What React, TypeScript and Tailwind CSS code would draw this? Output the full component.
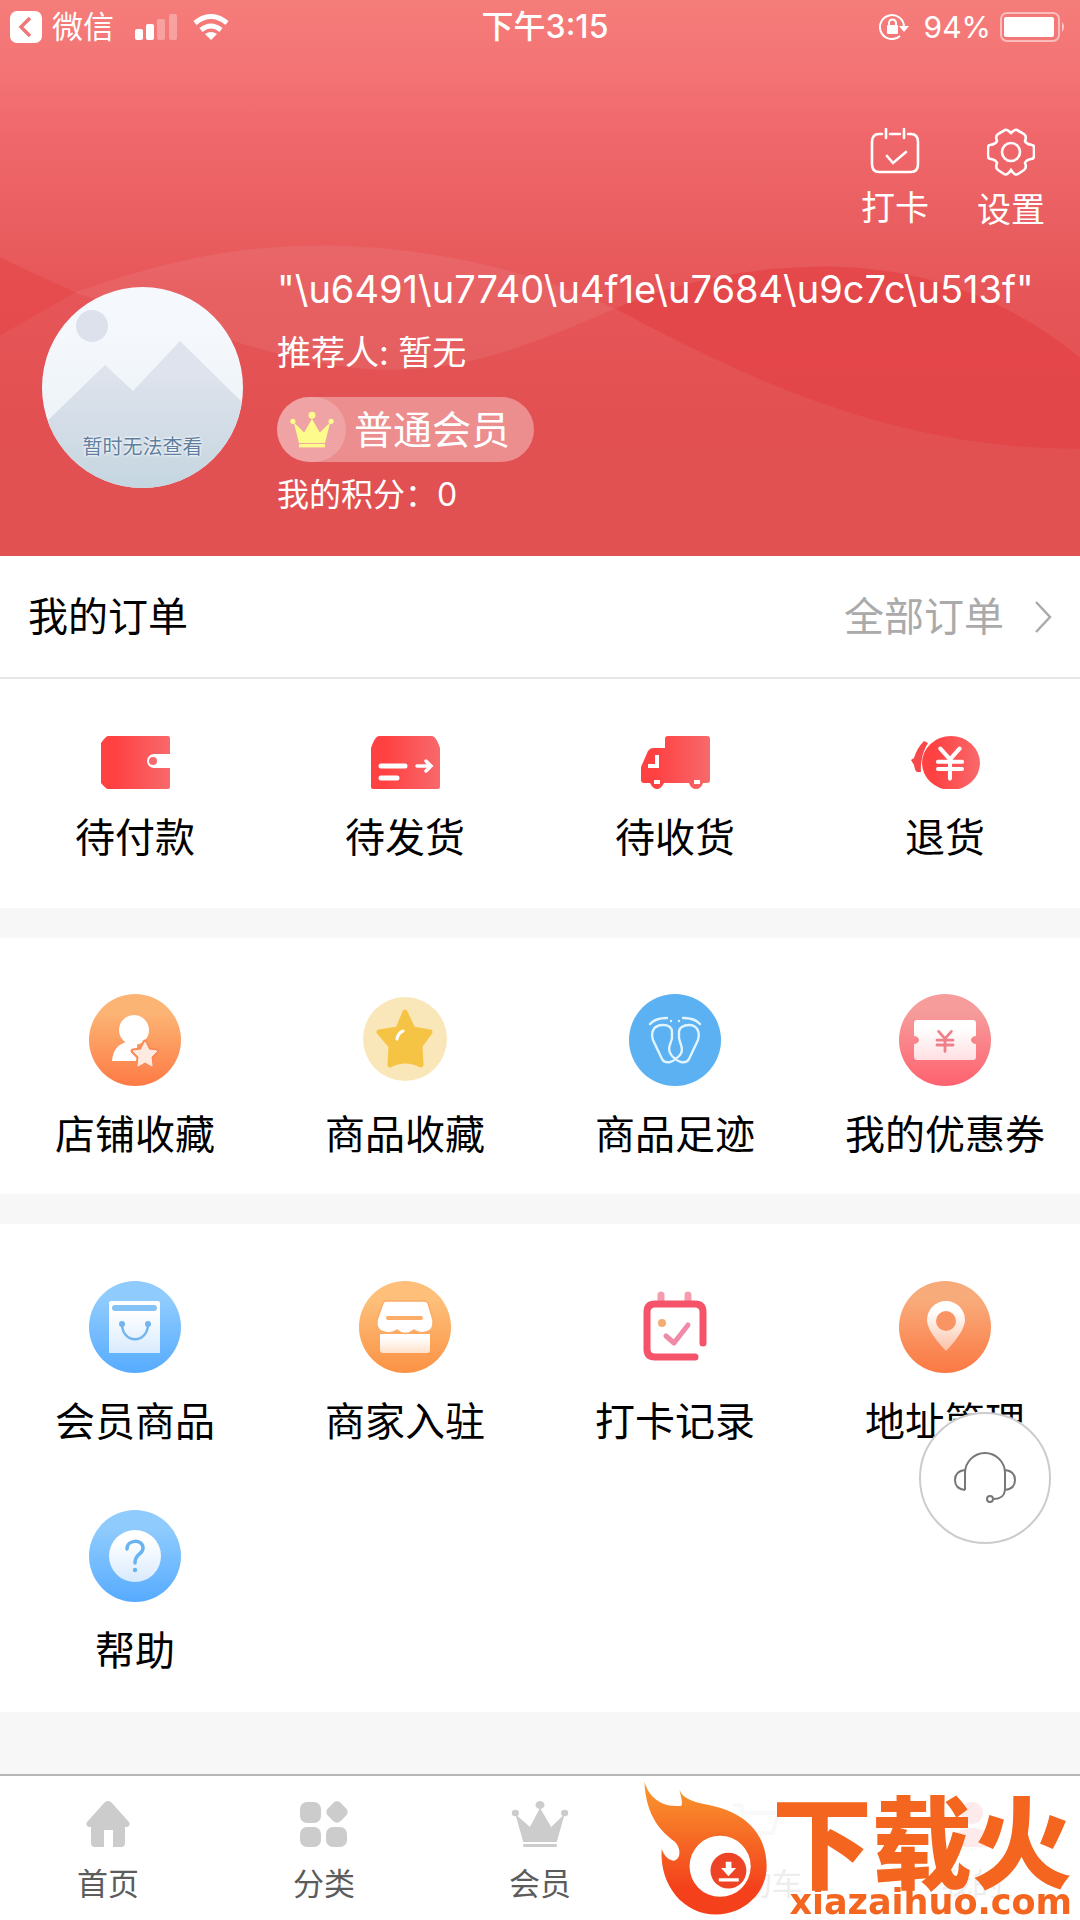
import type { ReactNode } from "react";

function Sym({ box, className, children }: { box: string; className: string; children: ReactNode }) {
  return (
    <svg viewBox={box} className={className} fill="none" aria-hidden="true">
      {children}
    </svg>
  );
}

function Gradients() {
  const stops: [string, string, string, boolean][] = [
    ["gOrange", "#fcb474", "#fd7a45", true],
    ["gAmber", "#fdbf7a", "#fb9244", true],
    ["gCoral", "#f8ab7a", "#fb7843", true],
    ["gPink", "#f69c9b", "#fe616f", true],
    ["gBlue", "#8fcbfd", "#56abff", true],
    ["gRed", "#ff4142", "#f8696c", false],
    ["gWhiteBlue", "#ffffff", "#d8eafd", true],
    ["gWhitePink", "#ffffff", "#ffdfe2", true],
    ["gWhiteAmber", "#ffffff", "#fee2cb", true],
    ["gPin", "#ffffff", "#fcc0a3", true],
    ["gAvatar", "#f5f8fc", "#e8f0f4", true],
    ["gHill", "#dfe3ed", "#c5d6e0", true],
    ["gFlame", "#f99a2e", "#f4411c", true],
  ];
  return (
    <svg className="absolute h-0 w-0" aria-hidden="true">
      <defs>
        {stops.map(([id, a, b, vertical]) => (
          <linearGradient key={id} id={id} x1="0" y1="0" x2={vertical ? "0" : "1"} y2={vertical ? "1" : "0"}>
            <stop offset={id === "gFlame" ? "0" : "0.2"} stopColor={a} />
            <stop offset={id === "gFlame" ? "0.8" : "1"} stopColor={b} />
          </linearGradient>
        ))}
      </defs>
    </svg>
  );
}

function Yen({ x, y, s, color, w }: { x: number; y: number; s: number; color: string; w: number }) {
  return (
    <path
      transform={`translate(${x} ${y}) scale(${s})`}
      d="M-8-12 0-3 8-12M0-3V13M-10-1H10M-10 5H10"
      stroke={color}
      strokeWidth={w}
      strokeLinecap="round"
    />
  );
}

const orders = [
  {
    label: "待付款",
    icon: (
      <>
        <path d="M7 0H67Q69 0 69 2V18H53A7 7 0 0 0 53 32H69V51Q69 53 67 53H7Q5 53 0 47V7Q5 0 7 0Z" fill="url(#gRed)" />
        <circle cx="52" cy="25" r="4" fill="#f8696c" />
      </>
    ),
  },
  {
    label: "待发货",
    icon: (
      <>
        <path d="M8 0H61Q65 0 69 12V51Q69 53 67 53H2Q0 53 0 51V12Q4 0 8 0Z" fill="url(#gRed)" />
        <path d="M10 30H34M10 42H26" stroke="#fff" strokeWidth="5" strokeLinecap="round" />
        <path d="M46 30H60M55 25 60 30 55 35" stroke="#fff" strokeWidth="3.5" strokeLinecap="round" />
      </>
    ),
  },
  {
    label: "待收货",
    icon: (
      <>
        <path
          d="M27 0H66Q69 0 69 3V44Q69 47 66 47H62Q60 53 55 53T48 47H23Q20 53 16 53T9 47H3Q0 47 0 44V31L7 15Q9 12 12 12H24V3Q24 0 27 0Z"
          fill="url(#gRed)"
        />
        <path d="M16 19V30H7M13 46H19M53 46H59" stroke="#fff" strokeWidth="4" />
      </>
    ),
  },
  {
    label: "退货",
    icon: (
      <>
        <path d="M13 5 17 7Q9 20 10 36H6Q4 35 3 29L0 24 3 22Q6 12 13 5Z" fill="#f5494c" />
        <ellipse cx="40" cy="27" rx="29" ry="27" fill="url(#gRed)" />
        <Yen x={39} y={27} s={1.2} color="#fff" w={3.4} />
      </>
    ),
  },
];

const STAR = "M0-12 4-4 12-3 6 3 7 12 0 8-7 12-6 3-12-3-4-4Z";

const favourites = [
  {
    label: "店铺收藏",
    icon: (
      <>
        <circle cx="46" cy="46" r="46" fill="url(#gOrange)" />
        <circle cx="45" cy="36" r="15" fill="#fff" />
        <path d="M23 67Q24 52 37 48H48V67Z" fill="#fff" />
        <path transform="translate(56 60)" d={STAR} fill="#ffe6da" stroke="#fc8a56" strokeWidth="5" strokeLinejoin="round" />
        <path transform="translate(56 60)" d={STAR} fill="#ffeae1" stroke="#ffeae1" strokeLinejoin="round" />
      </>
    ),
  },
  {
    label: "商品收藏",
    icon: (
      <>
        <circle cx="46" cy="45" r="42" fill="#fae7b9" />
        <path
          d="M46 18 54 35 71 38 61 52 62 71Q46 63 31 71L32 52 20 38 39 35Z"
          fill="#f6c445"
          stroke="#f6c445"
          strokeWidth="5"
          strokeLinejoin="round"
        />
        <path d="M38 45Q39 39 44 37" stroke="#fff" strokeWidth="3" strokeLinecap="round" />
      </>
    ),
  },
  {
    label: "商品足迹",
    icon: (
      <>
        <circle cx="46" cy="46" r="46" fill="#5bb1f1" />
        <g stroke="#e2f4ff" strokeWidth="2.4" strokeLinecap="round">
          <path d="M34 31C23 31 22 40 24 46L33 65Q35 69 41 68 45 67 50 62C56 56 51 50 50 44V38C50 34 54 31 60 31 69 31 71 39 69 46L60 65Q58 69 52 68 48 67 43 62C37 55 42 50 43 44V38C43 34 40 31 34 31Z" />
          <path d="M21 30Q26 24 38 24M71 30Q66 24 54 24M42 27V27M50 27V27" />
        </g>
      </>
    ),
  },
  {
    label: "我的优惠券",
    icon: (
      <>
        <circle cx="46" cy="46" r="46" fill="url(#gPink)" />
        <path
          d="M18 26H74Q77 26 77 29V42A5 4 0 0 0 77 50V63Q77 66 74 66H18Q15 66 15 63V50A5 4 0 0 0 15 42V29Q15 26 18 26Z"
          fill="url(#gWhitePink)"
        />
        <Yen x={46} y={47} s={0.8} color="#ee8089" w={3.5} />
      </>
    ),
  },
];

const services = [
  {
    label: "会员商品",
    icon: (
      <>
        <circle cx="46" cy="46" r="46" fill="url(#gBlue)" />
        <path d="M22 20H69Q71 20 71 22V72H20V22Q20 20 22 20Z" fill="url(#gWhiteBlue)" />
        <path d="M26 27H65" stroke="#85c3f7" strokeWidth="6" strokeLinecap="round" />
        <path d="M33 44C34 63 58 63 59 44" stroke="#72b5ee" strokeWidth="2.5" />
        <circle cx="33" cy="43" r="3" fill="#72b5ee" />
        <circle cx="59" cy="43" r="3" fill="#72b5ee" />
      </>
    ),
  },
  {
    label: "商家入驻",
    icon: (
      <>
        <circle cx="46" cy="46" r="46" fill="url(#gAmber)" />
        <path d="M21 53H71V69Q71 72 68 72H24Q21 72 21 69Z" fill="url(#gWhiteAmber)" />
        <path
          d="M27 20H65Q68 20 69 22L74 39Q75 50 67 51 60 53 55 49 46 56 38 49 32 53 25 51 17 50 18 39L24 22Q25 20 27 20Z"
          fill="#fff"
          stroke="#fcac69"
          strokeWidth="1.5"
        />
        <path d="M29 37H62" stroke="#fbad68" strokeWidth="4" strokeLinecap="round" />
      </>
    ),
  },
  {
    label: "打卡记录",
    icon: (
      <>
        <path d="M32 20V14M59 20V14" stroke="#f79caf" strokeWidth="7" strokeLinecap="round" />
        <path
          d="M74 62V31Q74 23 66 23H26Q18 23 18 31V68Q18 76 26 76H66"
          stroke="#f5536a"
          strokeWidth="7"
          strokeLinecap="round"
        />
        <circle cx="33" cy="42" r="4" fill="#f2ac76" />
        <path d="M37 55 45 62 59 44" stroke="#f08aa8" strokeWidth="5" strokeLinecap="round" strokeLinejoin="round" />
      </>
    ),
  },
  {
    label: "地址管理",
    icon: (
      <>
        <circle cx="46" cy="46" r="46" fill="url(#gCoral)" />
        <path d="M47 70Q28 50 28 39A19 19 0 0 1 66 39Q66 50 47 70Z" fill="url(#gPin)" />
        <circle cx="47" cy="40" r="10" fill="#f99565" />
      </>
    ),
  },
  {
    label: "帮助",
    icon: (
      <>
        <circle cx="46" cy="46" r="46" fill="url(#gBlue)" />
        <circle cx="46" cy="46" r="26" fill="url(#gWhiteBlue)" />
        <path d="M38 39C38 29 54 29 54 38 54 45 46 43 46 53" stroke="#6ab3ef" strokeWidth="3.5" strokeLinecap="round" />
        <circle cx="46" cy="60" r="2.2" fill="#6ab3ef" />
      </>
    ),
  },
];

const CROWN = "M3 13 16 26 25 7 35 26 47 13 40 41H10Z";

const tabs = [
  {
    label: "首页",
    faded: false,
    icon: (
      <path
        d="M22 1Q25-1 28 1L46 21Q48 25 44 26H42V42Q42 46 38 46H30V29H21V46H12Q8 46 8 42V26H6Q2 25 4 21Z"
        fill="#ccc"
      />
    ),
  },
  {
    label: "分类",
    faded: false,
    icon: (
      <g fill="#ccc">
        <rect x="1" y="1" width="21" height="21" rx="7" />
        <rect x="29" y="2" width="18" height="18" rx="5" transform="rotate(45 38 11)" />
        <rect x="1" y="26" width="21" height="20" rx="7" />
        <rect x="27" y="26" width="21" height="20" rx="7" />
      </g>
    ),
  },
  {
    label: "会员",
    faded: false,
    icon: (
      <g transform="translate(-3 0) scale(1.12 1)" fill="#ccc">
        <path d={CROWN} />
        <circle cx="3" cy="12" r="3.2" />
        <circle cx="25" cy="4" r="4" />
        <circle cx="47" cy="12" r="3.2" />
        <path d="M10 43H40V46H10Z" />
      </g>
    ),
  },
  {
    label: "购物车",
    faded: true,
    icon: <path d="M2 4H10L16 32H42L47 12H12" stroke="#ccc" strokeWidth="4" />,
  },
  {
    label: "我的",
    faded: true,
    icon: <path d="M14 12a11 11 0 0 1 22 0a11 11 0 0 1-22 0M4 46Q6 27 25 27T46 46Z" fill="#f04a4a" />,
  },
];

function Grid({ items, box, size }: { items: { label: string; icon: ReactNode }[]; box: string; size: string }) {
  return (
    <div className="grid grid-cols-4 gap-y-[60px]">
      {items.map((item) => (
        <button key={item.label} type="button" className="flex flex-col items-center">
          <Sym box={box} className={size}>
            {item.icon}
          </Sym>
          <span className="mt-[21px] text-[40px] leading-[56px]">{item.label}</span>
        </button>
      ))}
    </div>
  );
}

function StatusBar() {
  return (
    <div className="grid grid-cols-[1fr_auto_1fr] items-center pl-[10px] pt-[7px] text-[31px] leading-[40px]">
      <div className="flex items-center">
        <Sym box="0 0 32 32" className="h-8 w-8">
          <rect width="32" height="32" rx="7" fill="#fff" />
          <path d="M20 7 11 16 20 25" stroke="#ee7879" strokeWidth="3.5" />
        </Sym>
        <span className="ml-[10px]">微信</span>
        <Sym box="0 0 42 26" className="ml-[21px] h-[26px] w-[42px]">
          <g fill="#fff">
            <rect y="15" width="8" height="11" rx="2" />
            <rect x="11" y="10" width="8" height="16" rx="2" />
            <rect x="22" y="5" width="8" height="21" rx="2" opacity="0.3" />
            <rect x="34" width="8" height="26" rx="2" opacity="0.3" />
          </g>
        </Sym>
        <Sym box="0 0 36 26" className="ml-[16px] h-[26px] w-9">
          <path d="M2 9Q18-4 34 9" stroke="#fff" strokeWidth="5" />
          <path d="M8 16Q18 8 28 16" stroke="#fff" strokeWidth="5" />
          <path d="M12 20Q18 16 24 20L18 26Z" fill="#fff" />
        </Sym>
      </div>
      <div className="text-center text-[32px] font-medium">下午3:15</div>
      <div className="flex items-center justify-end pr-[14px] text-[30px]">
        <Sym box="0 0 30 26" className="h-[26px] w-[30px]">
          <path d="M25 13A12 12 0 1 0 21 22" stroke="#fff" strokeWidth="2" />
          <path d="M20 12H30L25 18Z" fill="#fff" />
          <rect x="8" y="11" width="11" height="9" rx="1" fill="#fff" />
          <path d="M10 12V9A3 3 0 0 1 17 9V12" stroke="#fff" strokeWidth="2" />
        </Sym>
        <span className="ml-[15px]">94%</span>
        <Sym box="0 0 66 30" className="ml-[9px] h-[30px] w-[66px]">
          <rect x="1" y="1" width="58" height="28" rx="6" stroke="#fff" strokeWidth="2" opacity="0.5" />
          <rect x="4" y="5" width="50" height="20" rx="2" fill="#fff" />
          <path d="M62 10Q66 15 62 20Z" fill="#fff" opacity="0.6" />
        </Sym>
      </div>
    </div>
  );
}

function Waves() {
  return (
    <svg viewBox="0 0 1080 555" preserveAspectRatio="none" className="absolute inset-0 h-full w-full" aria-hidden="true">
      <path
        d="M75 292C180 255 250 245 325 245C430 246 530 270 615 308C530 345 470 368 400 369C320 372 230 340 75 292Z"
        fill="#fff"
        opacity="0.07"
      />
      <path d="M0 257 75 292 0 335Z" fill="#e54144" opacity="0.5" />
      <path
        d="M615 308C680 280 750 266 830 266C930 268 1010 300 1080 357V448C900 448 760 385 615 308Z"
        fill="#e44143"
        opacity="0.65"
      />
    </svg>
  );
}

function Header() {
  return (
    <header className="relative bg-[linear-gradient(#f57d7a_0%,#f37374_13%,#f0676b_25%,#ea6062_38%,#e65557_54%,#e25052_75%,#e15152_100%)] pb-[37px] text-white">
      <Waves />
      <div className="relative">
        <StatusBar />
        <div className="flex justify-end gap-12 pr-[35px] pt-[81px] text-[34px] leading-[48px]">
          <button type="button" className="flex flex-col items-center">
            <Sym box="0 0 50 46" className="h-[46px] w-[50px]">
              <g stroke="#fff" strokeWidth="2.6" strokeLinecap="round">
                <path d="M12 6H9Q2 6 2 14V36Q2 44 9 44H41Q48 44 48 36V14Q48 6 41 6H38M20 6H30M16 1V10M34 1V10M17 28 23 35 36 24" />
              </g>
            </Sym>
            <span className="mt-[10px]">打卡</span>
          </button>
          <button type="button" className="flex flex-col items-center">
            <Sym box="0 0 48 48" className="h-12 w-12">
              <path
                d="M18 2Q20 1 24 5 28 1 30 2L37 6Q40 8 38 13 39 16 45 17 47 17 47 20V28Q47 31 44 31 39 32 38 35 40 40 37 42L31 46Q28 48 24 42 20 48 17 46L11 42Q8 40 10 35 9 32 4 31 1 31 1 28V20Q1 17 3 17 9 16 10 13 8 8 11 6Z"
                stroke="#fff"
                strokeWidth="2.6"
              />
              <circle cx="24" cy="24" r="9" stroke="#fff" strokeWidth="2.6" />
            </Sym>
            <span className="mt-[10px]">设置</span>
          </button>
        </div>
        <div className="flex items-start px-[42px] pt-[26px]">
          <div className="relative mt-[27px] h-[201px] w-[201px] shrink-0 overflow-hidden rounded-full">
            <Sym box="0 0 201 201" className="h-full w-full">
              <rect width="201" height="201" fill="url(#gAvatar)" />
              <circle cx="50" cy="39" r="16" fill="#dce1ec" />
              <path d="M0 139 63 78 91 104 138 54 201 116V201H0Z" fill="url(#gHill)" />
            </Sym>
            <span className="absolute inset-x-0 top-[146px] text-center text-[20px] leading-[28px] text-[#607f9e] [text-shadow:0_0_3px_#fff,0_0_3px_#fff]">
              暂时无法查看
            </span>
          </div>
          <div className="ml-[34px] mt-[3px] flex min-w-0 flex-col items-start">
            <h1 className="whitespace-nowrap text-[38px] leading-[52px]">
              {'"\\u6491\\u7740\\u4f1e\\u7684\\u9c7c\\u513f"'}
            </h1>
            <p className="mt-[12px] text-[34px] leading-[52px]">推荐人: 暂无</p>
            <div className="mt-[18px] flex h-[65px] items-center rounded-full bg-white/35 pr-6">
              <span className="mr-2 flex h-[65px] w-[69px] items-center justify-center rounded-full bg-white/20">
                <Sym box="0 0 50 46" className="h-[40px] w-[46px]">
                  <g fill="#fdfb8c">
                    <path d="M4 14 16 26 25 10 34 26 46 14 40 38H10Z" />
                    <circle cx="3" cy="13" r="3" />
                    <circle cx="25" cy="6" r="4" />
                    <circle cx="47" cy="13" r="3" />
                    <path d="M10 39H40V43H10Z" />
                  </g>
                </Sym>
              </span>
              <span className="text-[39px] leading-[56px]">普通会员</span>
            </div>
            <p className="mt-[9px] text-[32px] leading-[48px]">我的积分：0</p>
          </div>
        </div>
      </div>
    </header>
  );
}

function Watermark() {
  return (
    <div className="pointer-events-none fixed bottom-0 right-2 z-20 flex items-end gap-1 text-[#f4651f]">
      <Sym box="66 62 376 406" className="mb-1 h-[136px] w-[125px] shrink-0">
        <path
          d="M70 65C80 100 110 145 182 138C186 125 178 105 176 90C185 115 210 125 260 135C370 155 438 220 438 320C438 400 370 465 285 465C190 465 115 380 122 268C130 290 145 303 160 303C182 298 180 262 160 245C120 215 75 170 70 65Z"
          fill="url(#gFlame)"
        />
        <circle cx="298" cy="320" r="92" fill="#fff" />
        <circle cx="323" cy="333" r="54" fill="#ee4426" />
        <path d="M315 306H332V325H346L323 350 301 325H315ZM294 356H354V366H294Z" fill="#fff" />
      </Sym>
      <div className="flex flex-col items-end">
        <span className="font-['Noto_Sans_CJK_SC',sans-serif] text-[100px] font-black leading-[92px]">下载火</span>
        <span className="font-['DejaVu_Sans',sans-serif] text-[35px] font-bold leading-[36px]">xiazaihuo.com</span>
      </div>
    </div>
  );
}

export default function App() {
  return (
    <div className="flex min-h-screen flex-col bg-[#f7f7f7] font-['Inter','Noto_Sans_CJK_SC',sans-serif] text-black">
      <Gradients />
      <Header />
      <main className="flex flex-col gap-[30px]">
        <section className="bg-white">
          <div className="flex items-center justify-between border-b-2 border-[#e6e6e6] px-7 pb-8 pt-[33px] text-[40px] leading-[56px]">
            <h2>我的订单</h2>
            <a href="#orders" className="flex items-center gap-[30px] text-[#aaa]">
              全部订单
              <Sym box="0 0 18 32" className="h-8 w-[18px]">
                <path d="M2 1 16 16 2 31" stroke="#aaa" strokeWidth="2.5" />
              </Sym>
            </a>
          </div>
          <div className="pb-[42px] pt-[57px]">
            <Grid items={orders} box="0 0 69 53" size="h-[53px] w-[69px]" />
          </div>
        </section>
        <section className="bg-white pb-[31px] pt-[56px]">
          <Grid items={favourites} box="0 0 92 92" size="h-[92px] w-[92px]" />
        </section>
        <section className="bg-white pb-[33px] pt-[57px]">
          <Grid items={services} box="0 0 92 92" size="h-[92px] w-[92px]" />
        </section>
      </main>
      <nav className="mt-auto grid grid-cols-5 border-t-2 border-[#b5b5b5] bg-white pb-[14px] pt-[25px]">
        {tabs.map((tab) => (
          <a key={tab.label} href="#tab" className="flex flex-col items-center">
            <span className={tab.faded ? "flex flex-col items-center opacity-10" : "flex flex-col items-center"}>
              <Sym box="0 0 50 46" className="h-[46px] w-[50px] overflow-visible">
                {tab.icon}
              </Sym>
              <span className="mt-[15px] text-[31px] leading-[44px] text-[#5c5c5c]">{tab.label}</span>
            </span>
          </a>
        ))}
      </nav>
      <button
        type="button"
        aria-label="客服"
        className="fixed bottom-[376px] right-[29px] z-10 flex h-[132px] w-[132px] items-center justify-center rounded-full border-2 border-[#ccc] bg-white"
      >
        <Sym box="0 0 62 52" className="h-[52px] w-[62px]">
          <path
            d="M11 38V21A20 20 0 0 1 51 21V38Q50 47 40 47M11 18Q1 19 1 28T11 38M51 18Q61 19 61 28T51 38"
            stroke="#777"
            strokeWidth="2"
          />
          <circle cx="36" cy="47" r="3" stroke="#777" strokeWidth="2" />
        </Sym>
      </button>
      <Watermark />
    </div>
  );
}
